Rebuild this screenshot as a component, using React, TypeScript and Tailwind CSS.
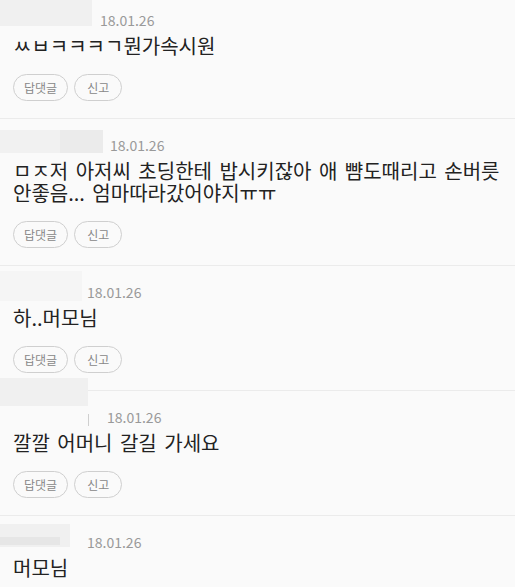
import React from 'react';

type Comment = {
  date: string;
  lines: string;
  dateGap: number;
  variant: number;
};

const comments: Comment[] = [
  { date: '18.01.26', lines: 'ㅆㅂㅋㅋㅋㄱ뭔가속시원', dateGap: 8, variant: 1 },
  {
    date: '18.01.26',
    lines: 'ㅁㅈ저 아저씨 초딩한테 밥시키잖아 애 뺨도때리고 손버릇 안좋음... 엄마따라갔어야지ㅠㅠ',
    dateGap: 7,
    variant: 2,
  },
  { date: '18.01.26', lines: '하..머모님', dateGap: 5, variant: 3 },
  { date: '18.01.26', lines: '깔깔 어머니 갈길 가세요', dateGap: 17, variant: 4 },
  { date: '18.01.26', lines: '머모님', dateGap: 17, variant: 5 },
];

// blurred-out nickname blocks, each one a bit different
const NamePlaceholder: React.FC<{ variant: number }> = ({ variant }) => {
  if (variant === 1) {
    return <div className="w-[92px] h-[32px] -mt-[7px] bg-[#f0f0f0]" />;
  }
  if (variant === 2) {
    return (
      <div className="flex w-[103px] h-[23px] mt-[4px]">
        <div className="w-[60px] bg-[#f1f1f1]" />
        <div className="flex-1 bg-[#ebebeb]" />
      </div>
    );
  }
  if (variant === 3) {
    return <div className="w-[82px] h-[30px] -mt-[2px] bg-[#f5f5f5]" />;
  }
  if (variant === 4) {
    return (
      <div className="flex items-end w-[90px] h-[32px] -mt-[20px]">
        <div className="w-[88px] h-[28px] self-start bg-[#f0f0f0]" />
        <div className="w-px h-[12px] -mb-[16px] bg-[#cfcfcf]" />
      </div>
    );
  }
  return (
    <div className="flex flex-col w-[70px] h-[23px] mt-[1px] bg-[#f0f0f0]">
      <div className="h-[13px]" />
      <div className="w-[60px] h-[8px] bg-[#e6e6e6]" />
    </div>
  );
};

const CommentItem: React.FC<{ c: Comment }> = ({ c }) => (
  <div className="border-t border-[#ebebeb] pt-[7px] pb-[17px]">
    <div className="flex items-start h-[31px]">
      <NamePlaceholder variant={c.variant} />
      <span
        className="text-[14px] leading-[20px] text-[#999] mt-[9px]"
        style={{ marginLeft: c.dateGap }}
      >
        {c.date}
      </span>
    </div>
    <p className="pl-[13px] pr-[12px] mt-[3px] text-[20px] leading-[22px] [word-spacing:3px] break-keep text-[#222]">
      {c.lines}
    </p>
    <div className="flex gap-[6px] pl-[13px] mt-[17px]">
      <button className="h-[27px] px-[10px] rounded-full border border-[#cfcfcf] text-[12px] text-[#888] bg-transparent">
        답댓글
      </button>
      <button className="h-[27px] px-[12px] rounded-full border border-[#cfcfcf] text-[12px] text-[#888] bg-transparent">
        신고
      </button>
    </div>
  </div>
);

export default function App() {
  return (
    <div
      className="w-[515px] h-[587px] overflow-hidden bg-[#fafafa]"
      style={{ fontFamily: '"Noto Sans CJK KR", "Noto Sans", sans-serif' }}
    >
      <div className="-mt-[7px]">
        {comments.map((c, i) => (
          <CommentItem key={i} c={c} />
        ))}
      </div>
    </div>
  );
}
